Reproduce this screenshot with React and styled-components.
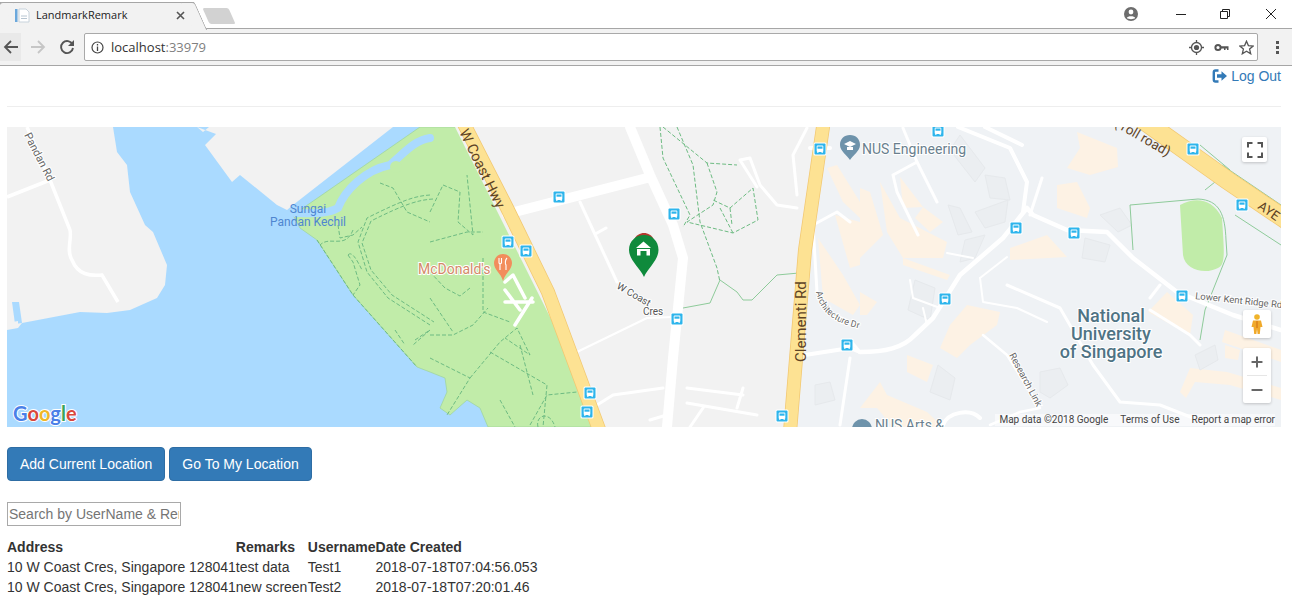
import styled, { createGlobalStyle } from "styled-components";
import { Plus, Minus } from "lucide-react";

const GlobalStyle = createGlobalStyle`
  html, body {
    margin: 0;
    padding: 0;
    background: #fff;
    overflow: hidden;
  }
  body {
    font-family: "Liberation Sans", Arial, sans-serif;
    font-size: 14px;
    line-height: 20px;
    color: #333;
  }
`;

/* browser chrome */
const TabStrip = styled.div`
  height: 28px;
  display: flex;
  align-items: flex-end;
  background: #fff;
  border-bottom: 1px solid #a6a6a6;
  position: relative;
`;

const Tab = styled.div`
  position: relative;
  width: 194px;
  height: 27px;
  margin-bottom: -1px;
  display: flex;
  align-items: center;
  padding: 0 9px 2px 15px;
  box-sizing: border-box;
  background: #f2f2f2;
  border-top: 1px solid #a6a6a6;
  font-family: "Open Sans", sans-serif;
  font-size: 11px;
  color: #222;
  &::after {
    content: "";
    position: absolute;
    top: -1px;
    right: -7px;
    width: 13px;
    height: 27px;
    background: #f2f2f2;
    border-top: 1px solid #a6a6a6;
    border-right: 1px solid #a6a6a6;
    transform: skewX(24deg);
    border-top-right-radius: 3px;
  }
  &::before {
    content: "";
    position: absolute;
    top: -1px;
    left: -6px;
    width: 13px;
    height: 27px;
    background: #f2f2f2;
    border-top: 1px solid #a6a6a6;
    border-left: 1px solid #a6a6a6;
    transform: skewX(-24deg);
    border-top-left-radius: 3px;
  }
`;

const TabIcon = styled.svg`
  position: relative;
  z-index: 1;
  flex: none;
  margin-right: 6px;
`;

const TabTitle = styled.span`
  position: relative;
  z-index: 1;
  flex: 1;
`;

const TabClose = styled.svg`
  position: relative;
  z-index: 1;
  flex: none;
`;

const NewTab = styled.div`
  width: 26px;
  height: 16px;
  margin: 0 0 4px 12px;
  background: #d2d2d2;
  border-radius: 2px;
  transform: skewX(24deg);
`;

const WindowControls = styled.div`
  margin-left: auto;
  align-self: flex-start;
  display: flex;
  align-items: center;
  height: 27px;
  padding-right: 15px;
`;

const WindowButton = styled.svg`
  display: block;
  margin-left: ${(props) => props.$gap}px;
`;

const Toolbar = styled.div`
  height: 36px;
  display: flex;
  align-items: center;
  background: #f2f2f2;
  border-bottom: 1px solid #a6a6a6;
  box-sizing: content-box;
`;

const NavButton = styled.div`
  width: ${(props) => props.$w}px;
  height: 28px;
  display: flex;
  align-items: center;
  justify-content: center;
  flex: none;
  background: ${(props) => (props.$hover ? "#e9e9e9" : "transparent")};
`;

const AddressBar = styled.div`
  flex: 1;
  height: 26px;
  margin: 0 18px 0 5px;
  display: flex;
  align-items: center;
  gap: 7px;
  padding: 0 3px 0 6px;
  background: #fff;
  border: 1px solid #a9a9a9;
  border-radius: 2px;
  font-family: "Open Sans", sans-serif;
  font-size: 13px;
  color: #333;
`;

const Port = styled.span`
  color: #808080;
`;

const Url = styled.span`
  flex: 1;
`;

const BarIcons = styled.div`
  display: flex;
  align-items: center;
  gap: 10px;
`;

const MenuDots = styled.div`
  width: 3px;
  height: 13px;
  margin-right: 13px;
  background: radial-gradient(circle at 1.5px 1.5px, #555 1.5px, transparent 1.6px) 0 0 / 3px 5px;
`;

/* page */
const Page = styled.div`
  padding: 0 11px 0 7px;
`;

const TopBar = styled.div`
  display: flex;
  justify-content: flex-end;
`;

const LogOut = styled.a`
  display: flex;
  align-items: center;
  gap: 3px;
  color: #337ab7;
  text-decoration: none;
`;

const Rule = styled.hr`
  margin: 20px 0;
  border: 0;
  border-top: 1px solid #eee;
`;

const MapFrame = styled.div`
  position: relative;
  height: 300px;
  overflow: hidden;
  background: #aadaff;
`;

const MapArt = styled.svg`
  display: block;
`;

const MapControl = styled.div`
  position: absolute;
  right: ${(props) => props.$right}px;
  top: ${(props) => props.$top}px;
  width: ${(props) => props.$w}px;
  height: ${(props) => props.$h}px;
  display: flex;
  flex-direction: column;
  align-items: center;
  justify-content: center;
  background: #fff;
  border-radius: 2px;
  box-shadow: 0 1px 3px rgba(0, 0, 0, 0.2);
`;

const ZoomStep = styled.div`
  flex: 1;
  width: 100%;
  display: flex;
  align-items: center;
  justify-content: center;
  color: #666;
`;

const ZoomDivider = styled.div`
  width: 20px;
  height: 1px;
  background: #e6e6e6;
`;

const Attribution = styled.div`
  position: absolute;
  right: 6px;
  bottom: 1px;
  display: flex;
  gap: 12px;
  font-family: Roboto, sans-serif;
  font-size: 10px;
  line-height: 12px;
  color: #444;
  background: rgba(255, 255, 255, 0.55);
  padding-left: 4px;
`;

const ButtonRow = styled.div`
  display: flex;
  gap: 4px;
  margin-top: 20px;
`;

const Button = styled.button`
  height: 34px;
  padding: 6px 12px;
  font-family: inherit;
  font-size: 14px;
  line-height: 20px;
  color: #fff;
  background: #337ab7;
  border: 1px solid #2e6da4;
  border-radius: 4px;
`;

const SearchInput = styled.input`
  display: block;
  width: 174px;
  height: 24px;
  box-sizing: border-box;
  margin: 21px 0 11px;
  padding: 1px;
  font-family: inherit;
  font-size: 14px;
  border: 1px solid #a9a9a9;
  outline: none;
  &::placeholder {
    color: #757575;
    opacity: 1;
  }
`;

const Table = styled.table`
  border-collapse: collapse;
  border-spacing: 0;
`;

const HeadCell = styled.th`
  padding: 0;
  text-align: left;
  font-weight: bold;
  min-width: ${(props) => props.$min || 0}px;
`;

const Cell = styled.td`
  padding: 0;
  white-space: nowrap;
`;

const rows = [
  { id: 1, address: "10 W Coast Cres, Singapore 128041", remarks: "test data", username: "Test1", created: "2018-07-18T07:04:56.053" },
  { id: 2, address: "10 W Coast Cres, Singapore 128041", remarks: "new screen", username: "Test2", created: "2018-07-18T07:20:01.46" },
];

const busStops = [
  [559, 197], [674, 214], [508, 242], [526, 251], [677, 319], [590, 393], [587, 412], [782, 416],
  [820, 149], [938, 131], [1016, 228], [1074, 233], [945, 299], [847, 345], [1182, 296], [1193, 149], [1242, 205],
];

const buildings = [
  "1077,132 1117,148 1118,167 1090,175 1067,168 1080,148",
  "1057,185 1077,182 1090,208 1087,218 1057,208",
  "1010,248 1047,235 1067,257 1010,260",
  "1148,312 1167,292 1193,315 1190,335",
  "950,325 967,305 1000,312 997,325 970,345 957,358 940,348",
  "880,182 900,218 947,242 943,258 903,258 887,232",
  "900,177 923,207 903,208",
  "923,207 943,222 930,232 915,218",
  "903,258 950,275 947,280 903,265",
  "860,188 870,192 883,235 860,258",
  "860,292 877,302 867,315 860,315",
  "907,355 933,365 927,382 907,372",
  "880,382 887,395 927,412 943,427 893,427 877,408 860,408",
  "818,238 843,275 860,305 853,315 823,298",
  "835,215 860,222 860,265 850,268",
  "827,168 837,165 860,202 860,218 843,202",
  "1180,392 1190,368 1227,372 1281,388 1281,400 1230,385 1195,382 1186,398",
  "1225,330 1281,350 1281,362 1222,342",
  "1225,345 1240,350 1238,360 1225,358",
];

const greyBlocks = [
  "960,135 985,168 975,182 950,150",
  "985,175 1005,178 1010,200 990,198",
  "948,205 960,208 972,232 958,235",
  "975,212 1008,200 1005,222 985,228",
  "965,240 985,235 975,258 960,262",
  "1100,215 1120,208 1132,225 1118,232",
  "1085,238 1110,245 1105,262 1082,258",
  "915,280 935,288 930,320 908,310",
  "938,365 955,378 950,400 930,392",
  "1040,372 1060,368 1068,385 1050,398 1040,392",
  "1195,355 1215,345 1218,360 1200,370",
  "815,385 830,382 835,400 815,405",
];

const dashedPaths = [
  "M380 183 L393 188 L407 212 L430 222",
  "M430 195 C415 196 403 200 367 218 L358 242 L367 272 L388 298 L430 325",
  "M433 199 C418 200 405 204 371 221 L362 243 L371 270 L392 295 L434 322",
  "M338 225 L340 238 L353 235 L362 227",
  "M348 255 L353 262 L360 285 L353 295",
  "M348 255 C352 250 358 262 362 270 M353 230 C345 250 330 235 320 245",
  "M317 240 L353 295 L417 367",
  "M395 330 L405 345 M415 340 L430 330 L413 345",
  "M430 212 L443 185 L460 192 L458 222 L473 235 L467 175",
  "M430 242 L467 232 L483 232",
  "M430 272 L445 288 L460 296 L470 288",
  "M430 335 L453 335 L473 325 L488 308",
  "M430 358 L470 378 L447 415",
  "M470 378 L500 342 L517 328 L530 355 L505 338",
  "M490 352 L547 385 L543 427",
  "M483 258 L483 312 L510 322",
  "M430 298 L453 332",
  "M530 425 L547 395 L577 392",
  "M538 427 C535 415 550 410 555 427",
  "M520 345 L533 395 M500 400 L515 427",
  "M660 127 L663 158 L690 215 L683 227",
  "M663 127 L707 163 L737 165",
  "M677 127 L693 165 L700 222 L717 268 L720 282",
  "M707 163 L717 192 L713 205 L687 222 L733 233 L758 220 L753 188 L730 208 L713 200",
  "M720 208 L733 233 M730 208 L732 225",
];

const Bus = ({ x, y }) => (
  <g transform={`translate(${x - 6.5} ${y - 6.5})`}>
    <rect width="13" height="13" rx="1.5" fill="#fff" />
    <rect x="1" y="1" width="11" height="11" rx="1" fill="#2eb5ec" />
    <rect x="3.2" y="3" width="6.6" height="6.4" rx="1" fill="#fff" />
    <rect x="4" y="4" width="5" height="2.2" fill="#2eb5ec" />
    <rect x="3.6" y="9.2" width="1.4" height="1.1" fill="#fff" />
    <rect x="8" y="9.2" width="1.4" height="1.1" fill="#fff" />
  </g>
);

const mapLabel = {
  fontFamily: "Roboto, sans-serif",
  paintOrder: "stroke",
  stroke: "#fff",
  strokeWidth: 2,
};

const MapDrawing = () => (
  <MapArt width="1274" height="300" viewBox="7 127 1274 300">
    <defs>
      <path id="architectureCurve" d="M816 292 C820 312 835 326 870 330" />
    </defs>

    {/* water + land */}
    <rect x="7" y="127" width="1274" height="300" fill="#aadaff" />
    <polygon fill="#f2f2f2" points="7,127 113,127 117,152 127,165 130,192 145,225 153,232 167,265 165,285 157,298 130,310 107,313 80,312 22,323 18,328 7,328" />
    <polygon fill="#aadaff" points="12,302 19,302 22,323 15,324" />
    <polygon fill="#f2f2f2" points="197,127 203,132 209,127 393,127 293,205 287,210 277,205 240,175 232,182 205,145 216,134" />
    <polygon fill="#f2f2f2" points="7,323 18,321 18,328 7,330" />

    {/* pandan road */}
    <path d="M27 127 L50 180 L70 230 C72 240 66 250 72 260 C78 275 90 276 102 275 L118 302 M7 197 L50 180" fill="none" stroke="#fff" strokeWidth="3.5" />

    {/* park */}
    <polygon fill="#c1eca9" stroke="#9ed49a" strokeWidth="0.7" points="420,127 460,127 605,427 488,427 480,408 467,400 450,415 440,408 447,392 445,378 430,372 417,367 353,295 317,240 300,228 293,215" />
    <path d="M430 138 C415 140 405 152 390 165 C365 170 345 190 338 208 C325 215 310 213 295 213" fill="none" stroke="#aadaff" strokeWidth="8" strokeLinecap="round" />
    <circle cx="396" cy="167" r="6" fill="#c1eca9" />

    {/* land east of the highway + campus */}
    <polygon fill="#f2f2f2" points="455,127 830,127 790,427 605,427" />
    <polygon fill="#eff2f5" points="826,127 1281,127 1281,427 786,427" />

    {buildings.map((p) => (
      <polygon key={p} points={p} fill="#fdf2e4" />
    ))}
    {greyBlocks.map((p) => (
      <polygon key={p} points={p} fill="#ebeef1" stroke="#e6e9ec" />
    ))}
    <path d="M1180 205 C1195 197 1212 198 1222 218 C1224 250 1226 265 1218 268 C1205 275 1185 270 1183 255 Z" fill="#c1eca9" />
    <path d="M1130 205 L1198 199 C1220 200 1225 215 1226 240 L1227 255 L1205 310 L1200 340" fill="none" stroke="#8ecb9a" strokeWidth="1" />
    <path d="M1130 205 L1133 250" fill="none" stroke="#8ecb9a" strokeWidth="1" />
    <path d="M1200 145 L1230 170 L1205 190 M1222 165 L1281 205 M1235 215 L1281 245" fill="none" stroke="#8ecb9a" strokeWidth="1" />

    {/* trails */}
    {dashedPaths.map((d) => (
      <path key={d} d={d} fill="none" stroke="#6dbb82" strokeWidth="1" strokeDasharray="4 2" />
    ))}
    <path d="M683 308 L710 303 L720 280 L737 292 L743 300 L752 300 L777 275 L810 272" fill="none" stroke="#8ecb9a" strokeWidth="1" />

    {/* white roads */}
    <g fill="none" stroke="#fff" strokeLinejoin="round" strokeLinecap="round">
      <path d="M630 127 L650 175 L673 225 L683 258 L673 358 L667 427" strokeWidth="10" />
      <path d="M507 214 L647 178" strokeWidth="10" />
      <path d="M580 202 L617 282 M597 233 L606 228" strokeWidth="3" />
      <path d="M577 352 L647 318 L672 317" strokeWidth="2" />
      <path d="M597 405 L613 395 L663 388 M687 388 L743 395 M687 403 L757 415 M743 388 L737 408 M703 408 L690 427 M650 420 L670 414" strokeWidth="3" />
      <path d="M505 282 L513 275 L525 298 M505 302 L533 302 M515 325 L532 298 M505 290 L520 310" strokeWidth="3.5" />
      <path d="M740 160 L750 158 L760 185 L777 205 L797 208 M740 160 L757 187" strokeWidth="3" />
      <path d="M797 195 L793 155 L807 128" strokeWidth="3" />
      <path d="M860 352 C885 352 903 348 915 335 L933 318 L960 275 L1003 238 L1027 208 L1033 215 L1067 230 L1107 232 L1133 258 L1177 292 L1233 315 L1281 330" strokeWidth="4.5" />
      <path d="M805 355 L850 348 L860 352 M810 148 L830 148" strokeWidth="4" />
      <path d="M958 127 L1010 148 L1027 182 L1023 212 M985 127 L1022 145" strokeWidth="4" />
      <path d="M820 158 L813 225 L817 292 M813 225 L837 212 L850 222 M840 425 L850 358 M850 340 L860 352" strokeWidth="3" />
      <path d="M893 175 L917 162 M893 175 L897 192 L918 235 M903 128 L917 162 L937 202" strokeWidth="3" />
      <path d="M980 278 L1007 257 M947 253 L973 258 M910 280 L913 298 L940 308 M923 308 L927 325" strokeWidth="2" />
      <path d="M943 425 C948 412 970 408 980 418" strokeWidth="4" />
      <path d="M1007 285 L1060 308 L1093 365 L1120 402 L1160 405 L1193 418" strokeWidth="3" />
      <path d="M980 278 L983 302 L1017 308 L1047 322" strokeWidth="2" />
      <path d="M983 335 L1007 355 L1040 408 L1020 412 L990 425" strokeWidth="2.5" />
      <path d="M1150 310 L1190 335 L1200 345 M1160 285 L1150 298 M1030 215 L1042 178" strokeWidth="3" />
    </g>

    {/* highways */}
    <g fill="none" strokeLinecap="butt">
      <path d="M462 120 L507 208 L548 292 L600 432" stroke="#f2c872" strokeWidth="14" />
      <path d="M462 120 L507 208 L548 292 L600 432" stroke="#fde293" strokeWidth="12.5" />
      <path d="M824 120 L805 250 L790 432" stroke="#f2c872" strokeWidth="14" />
      <path d="M824 120 L805 250 L790 432" stroke="#fde293" strokeWidth="12.5" />
      <path d="M1140 118 L1227 180 L1295 226" stroke="#f2c872" strokeWidth="19" />
      <path d="M1140 118 L1227 180 L1295 226" stroke="#fde293" strokeWidth="17.5" />
    </g>

    {busStops.map(([x, y]) => (
      <Bus key={`${x}-${y}`} x={x} y={y} />
    ))}

    {/* labels */}
    <text transform="translate(24 135) rotate(63)" fontSize="11" fill="#666" style={mapLabel}>Pandan Rd</text>
    <text x="308" y="213" textAnchor="middle" fontSize="12" fill="#4f86d0" fontFamily="Roboto, sans-serif">Sungai</text>
    <text x="308" y="226" textAnchor="middle" fontSize="12" fill="#4f86d0" fontFamily="Roboto, sans-serif">Pandan Kechil</text>
    <text x="418" y="274" fontSize="14" fill="#d38a68" style={mapLabel}>McDonald's</text>
    <text transform="translate(459 132) rotate(64)" fontSize="14.5" fill="#5d4325" fontFamily="Roboto, sans-serif">W Coast Hwy</text>
    <text transform="translate(616 288) rotate(30)" fontSize="10" fill="#555" style={mapLabel}>W Coast</text>
    <text x="643" y="315" fontSize="10" fill="#555" style={mapLabel}>Cres</text>
    <text transform="translate(806 362) rotate(-90)" fontSize="15" fill="#5d4325" fontFamily="Roboto, sans-serif">Clementi Rd</text>
    <text fontSize="9" fill="#666" style={mapLabel}>
      <textPath href="#architectureCurve">Architecture Dr</textPath>
    </text>
    <text x="862" y="154" fontSize="14" fill="#6a7f8e" style={mapLabel}>NUS Engineering</text>
    <text x="875" y="430" fontSize="14" fill="#6a7f8e" style={mapLabel}>NUS Arts &amp;</text>
    <text transform="translate(1114 126) rotate(30)" fontSize="13.5" fill="#5d4325" fontFamily="Roboto, sans-serif">(Toll road)</text>
    <text transform="translate(1257 208) rotate(35)" fontSize="13" fill="#5d4325" fontFamily="Roboto, sans-serif">AYE</text>
    <text transform="translate(1195 299) rotate(6)" fontSize="9.5" fill="#666" style={mapLabel}>Lower Kent Ridge Rd</text>
    <text transform="translate(1009 355) rotate(62)" fontSize="9.5" fill="#666" style={mapLabel}>Research Link</text>
    <g fontFamily="Roboto, sans-serif" fontWeight="500" fontSize="18" fill="#4f7384" textAnchor="middle" style={{ paintOrder: "stroke", stroke: "#fff", strokeWidth: 2 }}>
      <text x="1111" y="322">National</text>
      <text x="1111" y="340">University</text>
      <text x="1111" y="358">of Singapore</text>
    </g>

    {/* nus pins */}
    <path d="M850 135 C844 135 840 139 840 145 C840 151 847 155 850 160 C853 155 860 151 860 145 C860 139 856 135 850 135 Z" fill="#6e93ab" />
    <path d="M844 144 L850 141 L856 144 L850 147 Z M847 147 L853 147 L853 150 L847 150 Z" fill="#fff" />
    <circle cx="862" cy="429" r="10" fill="#6e93ab" />

    {/* restaurant pin */}
    <path d="M503 254 C497 254 494 259 494 263 C494 270 501 273 503 281 C505 273 512 270 512 263 C512 259 509 254 503 254 Z" fill="#f28d5c" />
    <path d="M499 258 L499 263 L500 264 L500 270 M501.5 258 L501.5 263 L500 264 M507 258 C505 260 505 264 506 265 L506 270" fill="none" stroke="#fff" strokeWidth="1.1" />

    {/* selected marker */}
    <path d="M634 240 C636 235 640 233 644 233 C648 233 652 235 654 240 Z" fill="#b5382e" />
    <path d="M644 235 C636 235 629 241 629 250 C629 260 640 268 644 277 C648 268 658.5 260 658.5 250 C658.5 241 652 235 644 235 Z" fill="#0f8a3c" />
    <path d="M636 248 L643.5 241.5 L651 248 Z" fill="#fff" />
    <path d="M637 249 H650 V255.5 H646.5 V251 H640.5 V255.5 H637 Z" fill="#fff" />

    {/* google logo */}
    <g fontFamily="Lato, Roboto, sans-serif" fontWeight="700" fontSize="20" stroke="#fff" strokeWidth="2" style={{ paintOrder: "stroke" }}>
      <text x="13" y="421">
        <tspan fill="#4a80e8">G</tspan>
        <tspan fill="#d9473c">o</tspan>
        <tspan fill="#efb728">o</tspan>
        <tspan fill="#4a80e8">g</tspan>
        <tspan fill="#3ba55a">l</tspan>
        <tspan fill="#d9473c">e</tspan>
      </text>
    </g>
  </MapArt>
);

const App = () => {
  return (
    <>
      <GlobalStyle />
      <TabStrip>
        <Tab>
          <TabIcon width="15" height="15" viewBox="0 0 15 15">
            <rect x="0" y="1" width="2.5" height="13" fill="#6ba8dc" />
            <path d="M4 1 H11 L14 4 V14 H4 Z" fill="#fff" stroke="#c8d3dc" />
            <path d="M6 8 H12 M6 10.5 H12" stroke="#b8c6d2" strokeWidth="1" />
          </TabIcon>
          <TabTitle>LandmarkRemark</TabTitle>
          <TabClose width="9" height="9" viewBox="0 0 9 9">
            <path d="M1 1 L8 8 M8 1 L1 8" stroke="#555" strokeWidth="1.6" />
          </TabClose>
        </Tab>
        <NewTab />
        <WindowControls>
          <WindowButton width="16" height="16" viewBox="0 0 16 16" $gap={0}>
            <circle cx="8" cy="8" r="7" fill="#6d6d6d" />
            <circle cx="8" cy="6" r="2.4" fill="#fff" />
            <path d="M3.8 12 C4.5 9.5 11.5 9.5 12.2 12 C10.5 13.5 5.5 13.5 3.8 12 Z" fill="#fff" />
          </WindowButton>
          <WindowButton width="12" height="12" viewBox="0 0 12 12" $gap={36}>
            <path d="M1 6.5 H11" stroke="#222" strokeWidth="1" />
          </WindowButton>
          <WindowButton width="12" height="12" viewBox="0 0 12 12" $gap={32}>
            <path d="M1.5 3.5 H8.5 V10.5 H1.5 Z M3.5 3.5 V1.5 H10.5 V8.5 H8.5" fill="none" stroke="#222" strokeWidth="1" />
          </WindowButton>
          <WindowButton width="12" height="12" viewBox="0 0 12 12" $gap={34}>
            <path d="M1 1 L11 11 M11 1 L1 11" stroke="#222" strokeWidth="1" />
          </WindowButton>
        </WindowControls>
      </TabStrip>
      <Toolbar>
        <NavButton $w={21} $hover>
          <svg width="16" height="16" viewBox="0 0 16 16">
            <path d="M15 8 H2 M8 2 L2 8 L8 14" fill="none" stroke="#555" strokeWidth="1.8" />
          </svg>
        </NavButton>
        <NavButton $w={34}>
          <svg width="16" height="16" viewBox="0 0 16 16">
            <path d="M1 8 H14 M8 2 L14 8 L8 14" fill="none" stroke="#c6c6c6" strokeWidth="1.8" />
          </svg>
        </NavButton>
        <NavButton $w={24}>
          <svg width="16" height="16" viewBox="0 0 16 16">
            <path d="M13.5 5.5 A6 6 0 1 0 14 9" fill="none" stroke="#555" strokeWidth="1.9" />
            <path d="M15 1 V7 H9 Z" fill="#555" />
          </svg>
        </NavButton>
        <AddressBar>
          <svg width="13" height="13" viewBox="0 0 13 13">
            <circle cx="6.5" cy="6.5" r="5.5" fill="none" stroke="#444" strokeWidth="1.2" />
            <path d="M6.5 5.5 V10 M6.5 3 V4.4" stroke="#444" strokeWidth="1.3" />
          </svg>
          <Url>
            localhost<Port>:33979</Port>
          </Url>
          <BarIcons>
            <svg width="15" height="15" viewBox="0 0 15 15">
              <circle cx="7.5" cy="7.5" r="5" fill="none" stroke="#555" strokeWidth="1.3" />
              <circle cx="7.5" cy="7.5" r="2.6" fill="#555" />
              <path d="M7.5 0 V2.5 M7.5 12.5 V15 M0 7.5 H2.5 M12.5 7.5 H15" stroke="#555" strokeWidth="1.3" />
            </svg>
            <svg width="15" height="15" viewBox="0 0 15 15">
              <circle cx="4" cy="7.5" r="2.6" fill="none" stroke="#555" strokeWidth="2" />
              <path d="M6.5 6.2 H14.5 V10 H13 V8.5 H11.5 V10 H10 V8.5 H6.5 Z" fill="#555" />
            </svg>
            <svg width="15" height="15" viewBox="0 0 15 15">
              <path d="M7.5 1.2 L9.4 5.6 L14.2 6 L10.6 9.1 L11.7 13.8 L7.5 11.3 L3.3 13.8 L4.4 9.1 L0.8 6 L5.6 5.6 Z" fill="none" stroke="#555" strokeWidth="1.3" />
            </svg>
          </BarIcons>
        </AddressBar>
        <MenuDots />
      </Toolbar>
      <Page>
        <TopBar>
          <LogOut href="#">
            <svg width="16" height="14" viewBox="0 0 15 14">
              <path d="M6 1.5 H3 Q1.3 1.5 1.3 3.2 V10.8 Q1.3 12.5 3 12.5 H6" fill="none" stroke="#337ab7" strokeWidth="2.4" />
              <path d="M4.5 5.3 H9 V2.2 L14.5 7 L9 11.8 V8.7 H4.5 Z" fill="#337ab7" />
            </svg>
            Log Out
          </LogOut>
        </TopBar>
        <Rule />
        <MapFrame>
          <MapDrawing />
          <MapControl $right={14} $top={10} $w={25} $h={25}>
            <svg width="16" height="16" viewBox="0 0 16 16">
              <path d="M1 5.5 V1 H5.5 M10.5 1 H15 V5.5 M15 10.5 V15 H10.5 M5.5 15 H1 V10.5" fill="none" stroke="#555" strokeWidth="2" />
            </svg>
          </MapControl>
          <MapControl $right={10} $top={183} $w={28} $h={28}>
            <svg width="12" height="21" viewBox="0 0 12 21">
              <circle cx="6" cy="3" r="2.8" fill="#f0b32a" />
              <path d="M2 6.5 H10 L11.5 13 H9.5 L8.8 20 H6.6 L6 15 L5.4 20 H3.2 L2.5 13 H0.5 Z" fill="#f0a92a" />
              <path d="M5 7 H7 V14 H5 Z" fill="#e08a1c" />
            </svg>
          </MapControl>
          <MapControl $right={10} $top={221} $w={28} $h={55}>
            <ZoomStep>
              <Plus size={16} strokeWidth={3} />
            </ZoomStep>
            <ZoomDivider />
            <ZoomStep>
              <Minus size={16} strokeWidth={3} />
            </ZoomStep>
          </MapControl>
          <Attribution>
            <span>Map data ©2018 Google</span>
            <span>Terms of Use</span>
            <span>Report a map error</span>
          </Attribution>
        </MapFrame>
        <ButtonRow>
          <Button>Add Current Location</Button>
          <Button>Go To My Location</Button>
        </ButtonRow>
        <SearchInput placeholder="Search by UserName & Remarks" />
        <Table>
          <thead>
            <tr>
              <HeadCell>Address</HeadCell>
              <HeadCell $min={72}>Remarks</HeadCell>
              <HeadCell>Username</HeadCell>
              <HeadCell>Date Created</HeadCell>
            </tr>
          </thead>
          <tbody>
            {rows.map((row) => (
              <tr key={row.id}>
                <Cell>{row.address}</Cell>
                <Cell>{row.remarks}</Cell>
                <Cell>{row.username}</Cell>
                <Cell>{row.created}</Cell>
              </tr>
            ))}
          </tbody>
        </Table>
      </Page>
    </>
  );
};

export default App;
